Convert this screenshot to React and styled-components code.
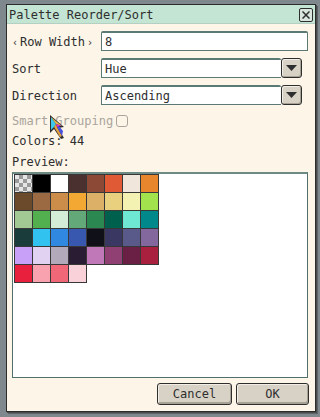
import React from "react";
import styled, { createGlobalStyle } from "styled-components";

const GlobalStyle = createGlobalStyle`
  html, body {
    margin: 0;
    padding: 0;
    background: #7e888d;
  }
  * { box-sizing: border-box; }
`;

const palette = [
  "checker", "#000000", "#ffffff", "#4a302e", "#8c4a36", "#e05a36", "#f0e6dc", "#e8862e",
  "#6b4a2c", "#9c6a42", "#cc8c4a", "#f2a832", "#dcb066", "#e8d07e", "#f4f2b2", "#a2e24c",
  "#a2c894", "#52b04e", "#d2ecd8", "#62a878", "#2a8850", "#00604e", "#6ee8d2", "#00888a",
  "#1a3c3a", "#32c2f0", "#3088e0", "#3858b0", "#101018", "#3a3862", "#5a5a8a", "#82689c",
  "#c8a0f8", "#e0d2f0", "#b2aaba", "#2a1c32", "#c078b8", "#904072", "#6a2044", "#a8203e",
  "#e8203e", "#f8a2b0", "#f06878", "#f8d2d8",
];

const Screen = styled.div`
  position: relative;
  width: 320px;
  height: 417px;
  padding: 4px 4px 5px 6px;
  font-family: "DejaVu Sans Mono", "Liberation Mono", monospace;
  font-size: 12px;
  color: #2e2e2e;
`;

const Dialog = styled.div`
  width: 310px;
  height: 408px;
  background: #fdf5e8;
  border: 1px solid #2c2c2c;
  box-shadow: 1px 1px 0 #4c4c4c, 2px 2px 0 #5c6468;
  display: flex;
  flex-direction: column;
`;

const TitleBar = styled.div`
  height: 22px;
  background: #c4e4d4;
  border-bottom: 1px solid #b4d0c2;
  display: flex;
  align-items: center;
  justify-content: space-between;
  padding: 1px 2px 0 2px;
`;

const Title = styled.span`
  font-size: 12px;
  color: #2e2e2e;
`;

const CloseButton = styled.div`
  width: 14px;
  height: 14px;
  border: 1px solid #2e2e2e;
  border-radius: 2px;
  background: #d8e6de;
  display: flex;
  align-items: center;
  justify-content: center;
`;

const Body = styled.div`
  flex: 1;
  display: flex;
  flex-direction: column;
  padding: 7px 7px 6px 5px;
`;

const Form = styled.div`
  display: grid;
  grid-template-columns: 89px 1fr;
  row-gap: 7px;
  align-items: center;
`;

const Label = styled.span`
  display: flex;
  align-items: center;
  gap: 2px;
  white-space: nowrap;
  padding-top: 2px;
  color: ${(p) => (p.$disabled ? "#a9a49c" : "#2e2e2e")};
`;

const Arrow = styled.span`
  font-size: 10px;
  width: 6px;
  text-align: center;
`;

const Field = styled.div`
  height: 20px;
  background: #ffffff;
  border: 1px solid #5b7a75;
  border-top-width: 2px;
  border-radius: 2px 2px 0 0;
  padding: 1px 3px 0;
  display: flex;
  align-items: center;
`;

const SelectWrap = styled.div`
  display: flex;
  align-items: stretch;
  width: 201px;
`;

const SelectField = styled(Field)`
  flex: 1;
  border-right: none;
`;

const DropButton = styled.div`
  width: 21px;
  height: 20px;
  background: #d8d2c6;
  border: 1px solid #2e2e2e;
  border-radius: 3px;
  box-shadow: inset 1px 1px 0 #f2eee6, inset -1px -1px 0 #a8a296;
  display: flex;
  align-items: center;
  justify-content: center;
`;

const Line = styled.div`
  margin-top: ${(p) => p.$top}px;
  height: 14px;
  display: flex;
  align-items: center;
  gap: 2px;
  color: ${(p) => (p.$disabled ? "#a9a49c" : "#2e2e2e")};
`;

const CheckBox = styled.span`
  width: 12px;
  height: 12px;
  border: 1px solid #a9a49c;
  border-radius: 3px;
  background: #fdf5e8;
  margin-left: 1px;
`;

const PreviewBox = styled.div`
  margin-top: 3px;
  height: 206px;
  background: #ffffff;
  border: 1px solid #4f706c;
  border-top: 2px solid #6d8a84;
  padding: 0 0 0 1px;
`;

const SwatchGrid = styled.div`
  display: grid;
  grid-template-columns: repeat(8, 17px);
  grid-auto-rows: 17px;
  gap: 1px;
  padding: 1px;
  width: fit-content;
`;

const Swatch = styled.div`
  box-shadow: 0 0 0 1px #383838;
  background: ${(p) => p.$color};
`;

const CheckerSwatch = styled.div`
  box-shadow: 0 0 0 1px #383838;
  background-color: #e6e6e6;
  background-image:
    linear-gradient(45deg, #9a9a9a 25%, transparent 25%, transparent 75%, #9a9a9a 75%),
    linear-gradient(45deg, #9a9a9a 25%, transparent 25%, transparent 75%, #9a9a9a 75%);
  background-size: 8px 8px;
  background-position: 0 0, 4px 4px;
`;

const Footer = styled.div`
  margin-top: 5px;
  display: flex;
  justify-content: flex-end;
  gap: 4px;
  margin-right: -1px;
`;

const Button = styled.div`
  width: ${(p) => p.$w}px;
  height: 22px;
  background: #d8d2c6;
  border: 1px solid #2e2e2e;
  border-radius: 3px;
  box-shadow: inset 1px 1px 0 #f2eee6, inset -1px -2px 0 #a8a296;
  display: flex;
  align-items: center;
  justify-content: center;
  color: #2e2e2e;
`;

const Cursor = styled.svg`
  position: absolute;
  left: 49px;
  top: 114px;
`;

const DownTriangle = () => (
  <svg width="11" height="6" viewBox="0 0 11 6">
    <path d="M0 0H11L5.5 6Z" fill="#2e2e2e" />
  </svg>
);

const Select = ({ value }) => (
  <SelectWrap>
    <SelectField>{value}</SelectField>
    <DropButton>
      <DownTriangle />
    </DropButton>
  </SelectWrap>
);

export default function App() {
  return (
    <>
      <GlobalStyle />
      <Screen>
        <Dialog>
          <TitleBar>
            <Title>Palette Reorder/Sort</Title>
            <CloseButton>
              <svg width="8" height="8" viewBox="0 0 8 8">
                <path d="M0.5 0.5L7.5 7.5M7.5 0.5L0.5 7.5" stroke="#2e2e2e" strokeWidth="1.5" />
              </svg>
            </CloseButton>
          </TitleBar>
          <Body>
            <Form>
              <Label>
                <Arrow>‹</Arrow>Row Width<Arrow>›</Arrow>
              </Label>
              <Field>8</Field>
              <Label>Sort</Label>
              <Select value="Hue" />
              <Label>Direction</Label>
              <Select value="Ascending" />
            </Form>
            <Line $top={9} $disabled>
              Smart Grouping<CheckBox />
            </Line>
            <Line $top={6}>Colors: 44</Line>
            <Line $top={7}>Preview:</Line>
            <PreviewBox>
              <SwatchGrid>
                {palette.map((c, i) =>
                  c === "checker" ? <CheckerSwatch key={i} /> : <Swatch key={i} $color={c} />
                )}
              </SwatchGrid>
            </PreviewBox>
            <Footer>
              <Button $w={75}>Cancel</Button>
              <Button $w={73}>OK</Button>
            </Footer>
          </Body>
        </Dialog>
        <Cursor width="16" height="26" viewBox="0 0 16 26">
          <path d="M1 1L1 19L5 15L12 25L15 24L9 14L15 13Z" fill="#2e2e2e" />
          <path d="M2 3L2 16L5 13L7 10Z" fill="#3ec8ea" />
          <path d="M7 10L5 13L11 23L13 22L8 13Z" fill="#e0a040" />
          <path d="M2 3L7 10L13 12Z" fill="#e8b448" />
          <path d="M8 13L13 22L14 17L10 12Z" fill="#4a50e0" />
          <path d="M7 10L13 12L10 12L8 13Z" fill="#e030d0" />
        </Cursor>
      </Screen>
    </>
  );
}
